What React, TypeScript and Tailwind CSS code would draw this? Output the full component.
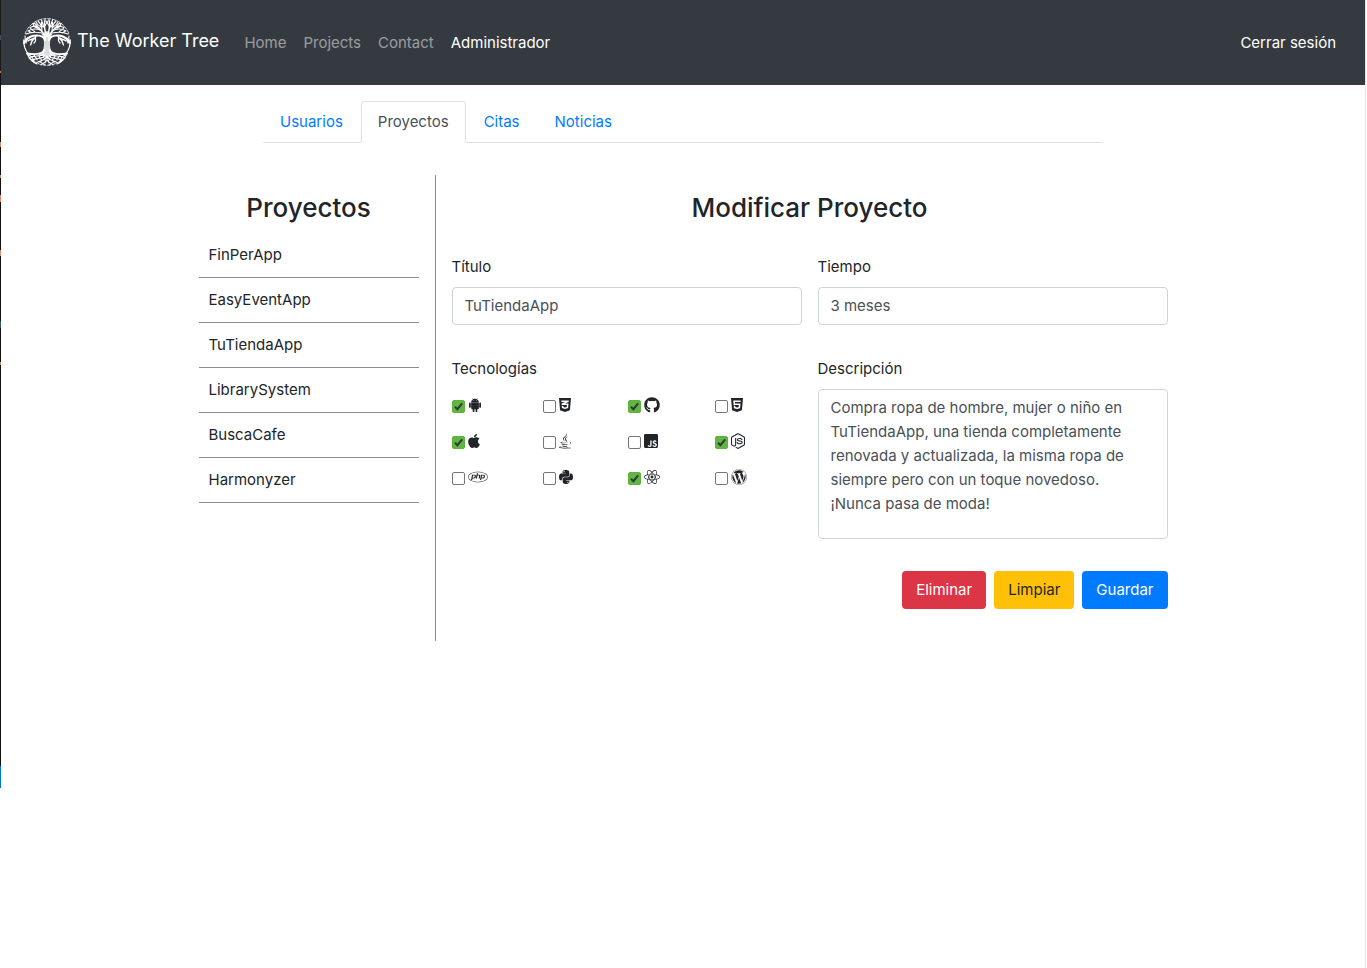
import React from "react";
import type { ReactNode } from "react";
import type { IconType } from "react-icons";
import {
  FaApple,
  FaCss3Alt,
  FaGithub,
  FaHtml5,
  FaJava,
  FaJsSquare,
  FaNodeJs,
  FaPhp,
  FaPython,
  FaReact,
  FaWordpress,
} from "react-icons/fa";

function AndroidIcon({ className }: { className?: string }) {
  return (
    <svg viewBox="0 0 448 512" fill="currentColor" className={className} aria-hidden="true">
      <path d="M89.6 204.5v115.8c0 15.4-12.1 27.7-27.5 27.7-15.3 0-30.1-12.4-30.1-27.7V204.5c0-15.1 14.8-27.5 30.1-27.5 15.1 0 27.5 12.4 27.5 27.5zm10.8 157c0 16.4 13.2 29.6 29.6 29.6h19.9l.3 61.1c0 36.9 55.2 36.6 55.2 0v-61.1h37.2v61.1c0 36.7 55.5 36.8 55.5 0v-61.1h20.2c16.2 0 29.4-13.2 29.4-29.6V182.1H100.4v179.4zm248-189.1H99.3c0-42.8 25.6-80 63.6-99.4l-19.1-35.3c-2.8-4.9 4.3-8 6.7-3.8l19.4 35.6c34.9-15.5 75-14.7 108.3 0L297.5 34c2.5-4.3 9.5-1.1 6.7 3.8L285.1 73c37.7 19.4 63.3 56.6 63.3 99.4zm-170.7-55.5c0-5.7-4.6-10.5-10.5-10.5-5.7 0-10.2 4.8-10.2 10.5s4.6 10.5 10.2 10.5c5.9 0 10.5-4.8 10.5-10.5zm113.4 0c0-5.7-4.6-10.5-10.2-10.5-5.9 0-10.5 4.8-10.5 10.5s4.6 10.5 10.5 10.5c5.6 0 10.2-4.8 10.2-10.5zm94.8 60.1c-15.1 0-27.5 12.1-27.5 27.5v115.8c0 15.4 12.4 27.7 27.5 27.7 15.4 0 30.1-12.4 30.1-27.7V204.5c0-15.4-14.8-27.5-30.1-27.5z" />
    </svg>
  );
}

/* One half of the tree; the other half is its mirror image. */
function TreeHalf() {
  return (
    <g fill="none" stroke="currentColor" strokeLinecap="round">
      <path strokeWidth="2" d="M22 22C20 17 13 16.500 8 18.500S3 22 1 25" />
      <path strokeWidth="1.6" d="M22.500 20C21 14 17 12 13 7" />
      <path strokeWidth="1.5" d="M23.500 18C21.500 12 20.500 8 22 2" />
      <path
        strokeWidth="1.1"
        d="M19 15C14 14 9 13.500 3 16M17 12C13 10.500 9 10.500 5 13M16 10C14 8 11 7.500 7 9.500M19 13C19 9 18 6 15 3M21.500 10C20 7 19.500 5 18.500 2M14 8C13 6 12 5 10 5.500M22 8C23 6 24 5 24 3M12 14C10 12 8 11.500 7 9.500M9 15C7 14 6 13 5 13M15 10C12 10 11 9 10 6M18 9C16 8 14 6 13 4M20 9C19 8 18 6 18.500 4"
      />
      <path
        strokeWidth="1.3"
        d="M13 18C12 21 10 21 8 25M11 20C9 22 7 21 5 23M12.500 20C13 22 12 24 11 25M9 22.500C9 24 8 26 7.500 27M5 20C4 22 3 22 3 25"
      />
      <path strokeWidth="1.3" strokeDasharray="3 1" d="M.8 22C.8 28 2 31 5 36" />
      <path strokeWidth="1.1" d="M2 18C3 20 1 22 2.500 24" />
      <path strokeWidth="1.8" d="M21.500 32C19 36.500 13 37 4 35.500" />
      <path
        strokeWidth="1.1"
        d="M21 36C17 40 12 36 6 40M22 37C19 43 14 38 9 43M24 38C22 44 17 41 13 45.500M24 42C22 46 20 44 18 47M6 36.500C7 39 10 38 10 41M11 37C11 40 15 39 14 42M16 37.500C16 41 20 40 18 43.500M20.500 38C20 41 24 41 22 45M8 42C10 41 12 43 11 44.500M15 44C17 43 19 45 22 47M5 37C6 41 10 44 14 46"
      />
    </g>
  );
}

function TreeLogo() {
  return (
    <svg viewBox="0 0 48 48" className="size-12 shrink-0 text-white" aria-hidden="true">
      <path
        fill="currentColor"
        fillOpacity="0.82"
        d="M18.500 16C21.500 20 21.500 28 20 32C19 35 17 36 14 37.500L21 38L24 42L27 38L34 37.500C31 36 29 35 28 32C26.500 28 26.500 20 29.500 16L24 13Z"
      />
      <TreeHalf />
      <g transform="matrix(-1 0 0 1 48 0)">
        <TreeHalf />
      </g>
      <path
        fill="none"
        stroke="currentColor"
        strokeWidth="1"
        strokeOpacity="0.8"
        strokeDasharray="4 0.8"
        d="M2 16A23.400 23.400 0 0 1 46 16M4 36A23.400 23.400 0 0 0 44 36"
      />
    </svg>
  );
}

const navLinks = [
  { label: "Home", active: false },
  { label: "Projects", active: false },
  { label: "Contact", active: false },
  { label: "Administrador", active: true },
];

function Navbar() {
  return (
    <header className="flex h-[85px] items-center bg-[#343a40] pr-[29px] pl-[22px]">
      <a href="#inicio" className="flex items-center gap-[6px] pb-[2px] text-lg text-white">
        <TreeLogo />
        <span className="pb-[2px]">The Worker Tree</span>
      </a>
      <nav className="ml-[25px] flex flex-1 items-center gap-[17px]">
        {navLinks.map(({ label, active }) => (
          <a key={label} href="#nav" className={active ? "text-white" : "text-white/50"}>
            {label}
          </a>
        ))}
        <a href="#salir" className="ml-auto text-white">
          Cerrar sesión
        </a>
      </nav>
    </header>
  );
}

const tabs = ["Usuarios", "Proyectos", "Citas", "Noticias"];

function Tabs() {
  return (
    <nav className="mx-auto mt-4 flex w-full max-w-[840px] gap-px border-b border-[#dee2e6]">
      {tabs.map((tab) => (
        <a
          key={tab}
          href="#tab"
          className={
            tab === "Proyectos"
              ? "-mb-px rounded-t border border-[#dee2e6] border-b-white bg-white px-4 py-2 text-[#495057]"
              : "-mb-px rounded-t border border-transparent px-4 py-2 text-[#007bff]"
          }
        >
          {tab}
        </a>
      ))}
    </nav>
  );
}

const projects = ["FinPerApp", "EasyEventApp", "TuTiendaApp", "LibrarySystem", "BuscaCafe", "Harmonyzer"];

function ProjectList() {
  return (
    <aside className="w-[237px] shrink-0 border-r border-[#8c8c8c] py-4 pr-4">
      <h2 className="mb-2 text-center text-[26px] leading-[34px] font-medium">Proyectos</h2>
      <ul>
        {projects.map((name) => (
          <li key={name} className="border-b border-[#8c8c8c]">
            <button type="button" className="w-full px-[10px] py-[10px] text-left">
              {name}
            </button>
          </li>
        ))}
      </ul>
    </aside>
  );
}

type Tech = { name: string; icon: IconType | typeof AndroidIcon; size: string; checked: boolean };

const technologies: Tech[] = [
  { name: "Android", icon: AndroidIcon, size: "h-4 w-[14px]", checked: true },
  { name: "CSS3", icon: FaCss3Alt, size: "h-4 w-3", checked: false },
  { name: "GitHub", icon: FaGithub, size: "h-4 w-4", checked: true },
  { name: "HTML5", icon: FaHtml5, size: "h-4 w-3", checked: false },
  { name: "Apple", icon: FaApple, size: "h-4 w-3", checked: true },
  { name: "Java", icon: FaJava, size: "h-4 w-3", checked: false },
  { name: "JavaScript", icon: FaJsSquare, size: "h-4 w-[14px]", checked: false },
  { name: "Node.js", icon: FaNodeJs, size: "h-4 w-[14px]", checked: true },
  { name: "PHP", icon: FaPhp, size: "h-4 w-5", checked: false },
  { name: "Python", icon: FaPython, size: "h-4 w-[14px]", checked: false },
  { name: "React", icon: FaReact, size: "h-4 w-4", checked: true },
  { name: "WordPress", icon: FaWordpress, size: "h-4 w-4", checked: false },
];

function TechOption({ name, icon: Icon, size, checked }: Tech) {
  return (
    <label className="flex h-6 items-center gap-[3px]">
      <span className="grid size-[13px]">
        <input
          type="checkbox"
          aria-label={name}
          defaultChecked={checked}
          className="peer col-start-1 row-start-1 size-[13px] appearance-none rounded-[2px] border border-[#767676] bg-white checked:border-[#5cb23c] checked:bg-[#5fb640]"
        />
        <svg
          viewBox="0 0 13 13"
          className="pointer-events-none invisible col-start-1 row-start-1 size-[13px] peer-checked:visible"
          aria-hidden="true"
        >
          <path d="M3 6.8L5.4 9.2L10.2 3.4" fill="none" stroke="#33373b" strokeWidth="2" />
        </svg>
      </span>
      <span className="pb-[2px]">
        <Icon className={size} />
      </span>
    </label>
  );
}

function Field({ id, label, children }: { id: string; label: string; children: ReactNode }) {
  return (
    <div className="flex flex-col gap-2">
      <label htmlFor={id}>{label}</label>
      {children}
    </div>
  );
}

const control = "w-full rounded border border-[#ced4da] bg-white px-3 py-[6px] text-[#495057]";

const description =
  "Compra ropa de hombre, mujer o niño en TuTiendaApp, una tienda completamente renovada y actualizada, la misma ropa de siempre pero con un toque novedoso.\n¡Nunca pasa de moda!";

function ProjectForm() {
  return (
    <form className="flex-1 pt-4 pb-8 pl-4">
      <h2 className="text-center text-[26px] leading-[34px] font-medium">Modificar Proyecto</h2>
      <div className="mt-[30px] grid grid-cols-2 gap-x-4 gap-y-8">
        <Field id="titulo" label="Título">
          <input id="titulo" type="text" defaultValue="TuTiendaApp" className={control} />
        </Field>
        <Field id="tiempo" label="Tiempo">
          <input id="tiempo" type="text" defaultValue="3 meses" className={control} />
        </Field>
        <fieldset>
          <legend>Tecnologías</legend>
          <div className="mt-[13px] grid grid-cols-[91px_85px_87px_1fr] gap-y-3">
            {technologies.map((tech) => (
              <TechOption key={tech.name} {...tech} />
            ))}
          </div>
        </fieldset>
        <Field id="descripcion" label="Descripción">
          <textarea id="descripcion" defaultValue={description} className={`${control} h-[150px] resize-none`} />
        </Field>
      </div>
      <div className="mt-8 flex justify-end gap-2">
        <button type="button" className="rounded bg-[#dc3545] px-[14px] py-[7px] text-white">
          Eliminar
        </button>
        <button type="reset" className="rounded bg-[#ffc107] px-[14px] py-[7px] text-[#212529]">
          Limpiar
        </button>
        <button type="button" className="rounded bg-[#007bff] px-[14px] py-[7px] text-white">
          Guardar
        </button>
      </div>
    </form>
  );
}

export default function App() {
  return (
    <div className="flex min-h-screen bg-white font-['Inter',sans-serif] text-[15px] leading-6 text-[#212529]">
      <div className="flex w-px shrink-0 flex-col" aria-hidden="true">
        <div className="h-[766px] bg-[linear-gradient(#1b1b1b_35px,#3a536b_35px_40px,#1b1b1b_40px_71px,#b8765c_71px_73px,#111_73px_142px,#d9896b_142px_147px,#111_147px_175px,#d9896b_175px_178px,#111_178px_195px,#d9896b_195px_202px,#111_202px_250px,#d9896b_250px_256px,#111_256px_321px,#3a536b_321px_328px,#111_328px_362px,#d9896b_362px_365px,#111_365px)]" />
        <div className="h-[22px] bg-[#0078d4]" />
      </div>
      <div className="flex min-w-0 flex-1 flex-col">
        <Navbar />
        <Tabs />
        <main className="mx-auto mt-8 flex w-full max-w-[969px]">
          <ProjectList />
          <ProjectForm />
        </main>
      </div>
      <div className="mr-px w-px shrink-0 bg-[#e4e4e4]" aria-hidden="true" />
    </div>
  );
}
